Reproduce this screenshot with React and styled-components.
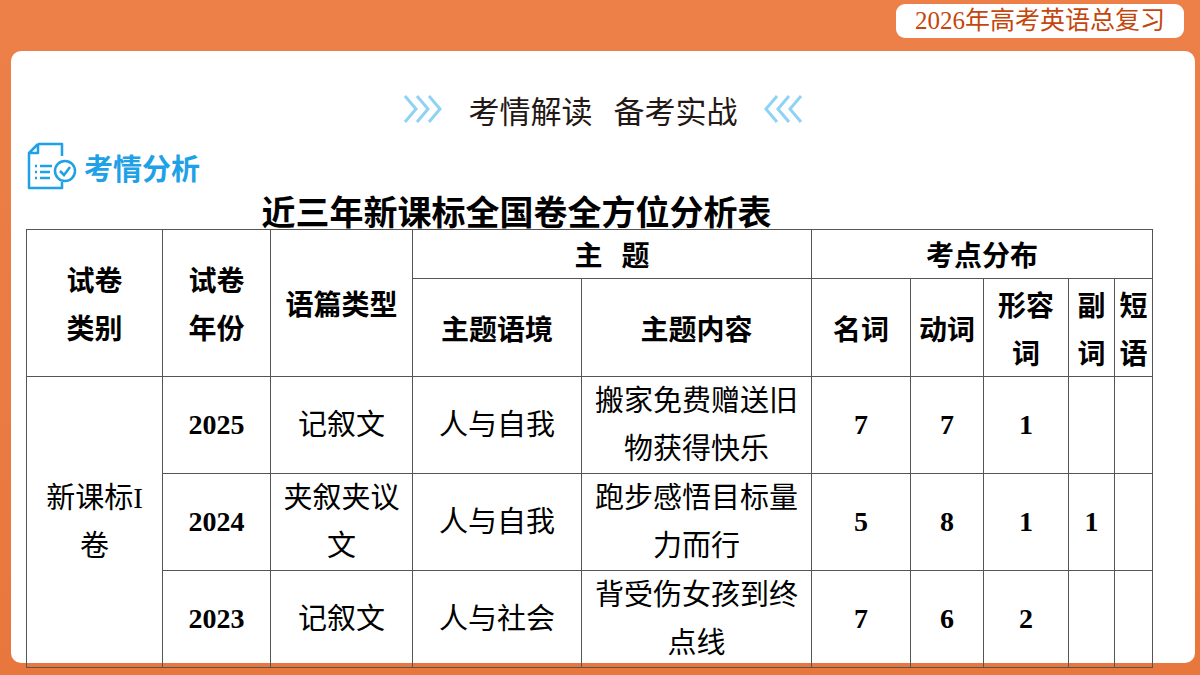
import styled, { createGlobalStyle } from "styled-components";

const Global = createGlobalStyle`
  html, body { margin: 0; padding: 0; }
  body { width: 1200px; height: 675px; overflow: hidden; background: #e8773d; }
`;

const Page = styled.div`
  width: 1200px;
  height: 675px;
  box-sizing: border-box;
  padding: 51px 5px 12px 11px;
  position: relative;
  background: linear-gradient(#ec8048, #e8773d);
`;

const Badge = styled.div`
  position: absolute;
  top: 4px;
  right: 16px;
  width: 288px;
  height: 34px;
  background: #fff;
  border-radius: 9px;
  color: #c4460c;
  font: 25px/34px "Liberation Serif", "Noto Sans CJK SC", serif;
  text-align: center;
`;

const Panel = styled.div`
  height: 100%;
  background: #fff;
  border-radius: 10px;
  padding: 34px 0 0 15px;
  box-sizing: border-box;
  font-family: "Noto Sans CJK SC", sans-serif;
`;

const Banner = styled.div`
  display: flex;
  align-items: center;
  justify-content: center;
  gap: 26px;
  height: 48px;
  font-size: 31px;
  color: #231815;
  margin-left: -15px;
`;

const SectionHead = styled.div`
  display: flex;
  align-items: center;
  gap: 6px;
  height: 56px;
  margin-top: 6px;
  color: #1ea1e6;
  font-size: 29px;
  font-weight: 700;
`;

const TableTitle = styled.div`
  width: 1126px;
  text-align: center;
  font-size: 34px;
  font-weight: 700;
  height: 36px;
  line-height: 36px;
  margin-top: -2px;
  margin-bottom: 0;
  padding-right: 145px;
  box-sizing: border-box;
`;

const Table = styled.table`
  border-collapse: collapse;
  width: 1126px;
  table-layout: fixed;
  td, th { border: 1.5px solid #555; text-align: center; padding: 0; }
  th { font-size: 28px; font-weight: 700; line-height: 48px; }
  td { font: 29px/48px "Liberation Serif", "Noto Sans CJK SC", serif; }
`;

const Row = styled.tr`
  height: ${(p) => p.$h}px;
`;

const Text = styled.td`
  && { padding: 0 ${(p) => p.$pad || 0}px; }
`;

const Num = styled.td`
  && { font-weight: 700; font-size: 28px; }
`;

const ChevSvg = styled.svg`
  transform: ${(p) => (p.$flip ? "scaleX(-1)" : "none")};
`;

const Chev = ({ flip }) => (
  <ChevSvg $flip={flip} width="40" height="32" viewBox="0 0 40 32">
    {[0, 12, 24].map((x) => (
      <path key={x} d={`M${x + 2} 3 L${x + 13} 16 L${x + 2} 29`} fill="none" stroke="#8fd3f4" strokeWidth="3" />
    ))}
  </ChevSvg>
);

const DocIcon = () => (
  <svg width="52" height="50" viewBox="0 0 52 50">
    <path d="M12 2 H36 V14 M12 2 L3 11 V46 H36 V40 M12 2 V11 H3" fill="none" stroke="#1ea1e6" strokeWidth="2.5" strokeLinejoin="round" />
    <g stroke="#1ea1e6" strokeWidth="2.5">
      <line x1="9" y1="24" x2="11" y2="24" /><line x1="14" y1="24" x2="26" y2="24" />
      <line x1="9" y1="30" x2="11" y2="30" /><line x1="14" y1="30" x2="24" y2="30" />
      <line x1="9" y1="36" x2="11" y2="36" /><line x1="14" y1="36" x2="24" y2="36" />
    </g>
    <circle cx="39" cy="29" r="10" fill="#fff" stroke="#1ea1e6" strokeWidth="2.5" />
    <path d="M34 29 L38 33 L44 25" fill="none" stroke="#1ea1e6" strokeWidth="2.5" />
  </svg>
);

const rows = [
  ["2025", "记叙文", "人与自我", "搬家免费赠送旧物获得快乐", "7", "7", "1", "", ""],
  ["2024", "夹叙夹议文", "人与自我", "跑步感悟目标量力而行", "5", "8", "1", "1", ""],
  ["2023", "记叙文", "人与社会", "背受伤女孩到终点线", "7", "6", "2", "", ""],
];

const widths = [136, 108, 142, 169, 230, 99, 73, 85, 46, 38];

export default function App() {
  return (
    <>
      <Global />
      <Page>
        <Badge>2026年高考英语总复习</Badge>
        <Panel>
          <Banner>
            <Chev />
            <span>考情解读&nbsp;&nbsp;&nbsp;备考实战</span>
            <Chev flip />
          </Banner>
          <SectionHead>
            <DocIcon />
            考情分析
          </SectionHead>
          <TableTitle>近三年新课标全国卷全方位分析表</TableTitle>
          <Table>
            <colgroup>
              {widths.map((w, i) => <col key={i} width={w} />)}
            </colgroup>
            <tbody>
              <Row $h={48}>
                <th rowSpan={2}>试卷<br />类别</th>
                <th rowSpan={2}>试卷<br />年份</th>
                <th rowSpan={2}>语篇类型</th>
                <th colSpan={2}>主&nbsp;&nbsp;&nbsp;题</th>
                <th colSpan={5}>考点分布</th>
              </Row>
              <Row $h={98}>
                <th>主题语境</th>
                <th>主题内容</th>
                <th>名词</th>
                <th>动词</th>
                <th>形容<br />词</th>
                <th>副<br />词</th>
                <th>短<br />语</th>
              </Row>
              {rows.map((r, i) => (
                <Row key={r[0]} $h={97}>
                  {i === 0 && <td rowSpan={3}>新课标I<br />卷</td>}
                  <Num>{r[0]}</Num>
                  <Text $pad={8}>{r[1]}</Text>
                  <td>{r[2]}</td>
                  <Text $pad={6}>{r[3]}</Text>
                  {r.slice(4).map((v, j) => <Num key={j}>{v}</Num>)}
                </Row>
              ))}
            </tbody>
          </Table>
        </Panel>
      </Page>
    </>
  );
}
